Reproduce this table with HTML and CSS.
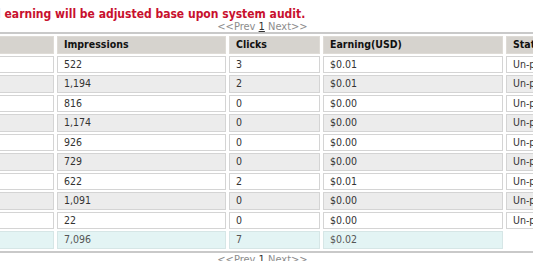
FILE: index.html
```html
<!DOCTYPE html>
<html>
<head>
<meta charset="utf-8">
<link rel="stylesheet" href="styles.css">
</head>
<body>
<p class="notice">Note: All earning will be adjusted base upon system audit.</p>
<div class="page">
  <div class="pager">&lt;&lt;Prev <u class="cur">1</u> Next&gt;&gt;</div>
  <table class="stats">
    <colgroup>
      <col class="c-date"><col class="c-imp"><col class="c-clk"><col class="c-earn"><col class="c-stat">
    </colgroup>
    <thead>
      <tr><th>Date</th><th>Impressions</th><th>Clicks</th><th>Earning(USD)</th><th>Status</th></tr>
    </thead>
    <tbody>
      <tr><td>2010-06-30</td><td>522</td><td>3</td><td>$0.01</td><td>Un-paid</td></tr>
      <tr class="alt"><td>2010-06-29</td><td>1,194</td><td>2</td><td>$0.01</td><td>Un-paid</td></tr>
      <tr><td>2010-06-28</td><td>816</td><td>0</td><td>$0.00</td><td>Un-paid</td></tr>
      <tr class="alt"><td>2010-06-27</td><td>1,174</td><td>0</td><td>$0.00</td><td>Un-paid</td></tr>
      <tr><td>2010-06-26</td><td>926</td><td>0</td><td>$0.00</td><td>Un-paid</td></tr>
      <tr class="alt"><td>2010-06-25</td><td>729</td><td>0</td><td>$0.00</td><td>Un-paid</td></tr>
      <tr><td>2010-06-24</td><td>622</td><td>2</td><td>$0.01</td><td>Un-paid</td></tr>
      <tr class="alt"><td>2010-06-23</td><td>1,091</td><td>0</td><td>$0.00</td><td>Un-paid</td></tr>
      <tr><td>2010-06-22</td><td>22</td><td>0</td><td>$0.00</td><td>Un-paid</td></tr>
      <tr class="total"><td>Total</td><td>7,096</td><td>7</td><td>$0.02</td><td class="blank"></td></tr>
    </tbody>
  </table>
  <div class="pager">&lt;&lt;Prev <u class="cur">1</u> Next&gt;&gt;</div>
</div>
</body>
</html>
```
FILE: styles.css
```css
html, body {
  margin: 0;
  padding: 0;
  background: #ffffff;
  overflow: hidden;
}
body {
  width: 533px;
  height: 261px;
  font-family: "DejaVu Sans Condensed", "DejaVu Sans", sans-serif;
  color: #333333;
}
.notice {
  margin: 7px 0 0 -52px;
  white-space: nowrap;
  font-size: 12px;
  font-weight: bold;
  line-height: 14px;
  color: #c8102e;
}
.page {
  width: 925px;
  margin-left: -200px;
}
.pager {
  text-align: center;
  font-size: 11px;
  line-height: 11px;
  color: #8c8c8c;
  margin: 0;
}
.pager .cur {
  color: #333333;
}
.stats {
  width: 100%;
  table-layout: fixed;
  border-collapse: separate;
  border-spacing: 3px 2px;
  border-top: 2px solid #c9c9c9;
  border-bottom: 2px solid #c9c9c9;
  margin: 0 0 1px;
  font-size: 10.5px;
}
.c-date { width: 251px; }
.c-imp { width: 169px; }
.c-clk { width: 91px; }
.c-earn { width: 180px; }
.stats th,
.stats td {
  border: 1px solid #d4d4d4;
  padding: 0 0 0 6px;
  height: 17.5px;
  box-sizing: border-box;
  line-height: 15.5px;
  text-align: left;
  white-space: nowrap;
  overflow: hidden;
}
.stats th {
  background: #d6d3ce;
  border-color: #dedbd6;
  color: #111111;
  font-weight: bold;
}
.stats tr.alt td {
  background: #ececec;
}
.stats tr.total td {
  background: #e3f4f4;
  border-color: #d6e6e6;
  color: #555555;
}
.stats tr.total td.blank {
  background: #ffffff;
  border-color: transparent;
}
```
